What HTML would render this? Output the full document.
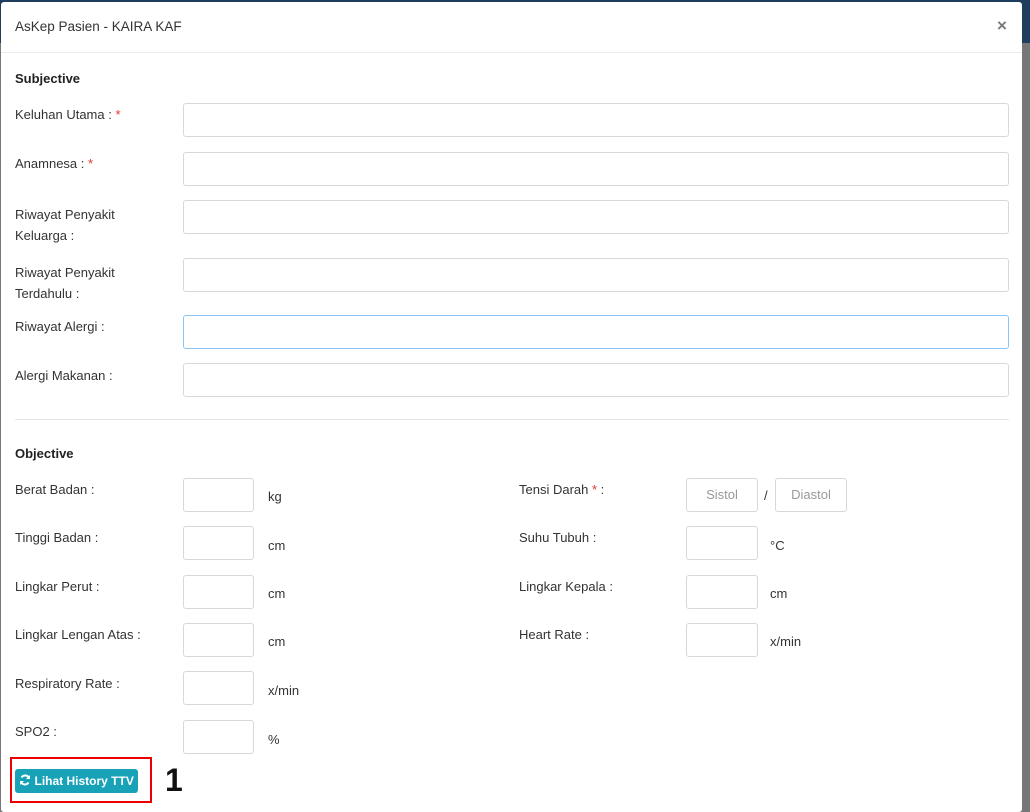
<!DOCTYPE html>
<html><head><style>
body{margin:0;width:1030px;height:805px;overflow:hidden;background:#777;font-family:"Liberation Sans",sans-serif;position:relative}
.top{position:absolute;left:0;top:0;width:1030px;height:43px;background:#1f3d5c}
.modal{position:absolute;left:1px;top:2px;width:1021px;height:810px;background:#fff;border-radius:3px}
.a{position:absolute}
.t{font-size:13px;color:#333}
.b{font-weight:bold;color:#222}
.in{position:absolute;border:1px solid #d6d9dc;border-radius:3px;height:32px;background:#fff;box-sizing:border-box}
.r{color:#e3342f}
.ph{font-size:13px;color:#999;text-align:center;line-height:32px}
</style></head><body>
<div class="top"></div>
<div class="modal"></div>
<div class="a t" style="left:15px;top:19px;font-size:13.5px">AsKep Pasien - KAIRA KAF</div>
<div class="a" style="left:997px;top:16px;font-size:17px;font-weight:bold;color:#777">×</div>
<div class="a" style="left:1px;top:52px;width:1021px;height:1px;background:#e9ecef"></div>
<div class="a t b" style="left:15px;top:71px">Subjective</div>
<div class="a t" style="left:15px;top:107px">Keluhan Utama : <span class="r">*</span></div>
<div class="in" style="left:183px;top:103px;width:826px;height:34px"></div>
<div class="a t" style="left:15px;top:156px">Anamnesa : <span class="r">*</span></div>
<div class="in" style="left:183px;top:152px;width:826px;height:34px"></div>
<div class="a t" style="left:15px;top:204px;line-height:21px">Riwayat Penyakit<br>Keluarga :</div>
<div class="in" style="left:183px;top:200px;width:826px;height:34px"></div>
<div class="a t" style="left:15px;top:262px;line-height:21px">Riwayat Penyakit<br>Terdahulu :</div>
<div class="in" style="left:183px;top:258px;width:826px;height:34px"></div>
<div class="a t" style="left:15px;top:319px">Riwayat Alergi :</div>
<div class="in" style="left:183px;top:315px;width:826px;height:34px;border-color:#8cc4f5"></div>
<div class="a t" style="left:15px;top:368px">Alergi Makanan :</div>
<div class="in" style="left:183px;top:363px;width:826px;height:34px"></div>
<div class="a" style="left:15px;top:419px;width:994px;height:1px;background:#e3e6e9"></div>
<div class="a t b" style="left:15px;top:446px">Objective</div>

<div class="a t" style="left:15px;top:482px">Berat Badan :</div>
<div class="in" style="left:183px;top:478px;width:71px;height:34px"></div>
<div class="a t" style="left:268px;top:489px">kg</div>
<div class="a t" style="left:15px;top:530px">Tinggi Badan :</div>
<div class="in" style="left:183px;top:526px;width:71px;height:34px"></div>
<div class="a t" style="left:268px;top:538px">cm</div>
<div class="a t" style="left:15px;top:579px">Lingkar Perut :</div>
<div class="in" style="left:183px;top:575px;width:71px;height:34px"></div>
<div class="a t" style="left:268px;top:586px">cm</div>
<div class="a t" style="left:15px;top:627px">Lingkar Lengan Atas :</div>
<div class="in" style="left:183px;top:623px;width:71px;height:34px"></div>
<div class="a t" style="left:268px;top:634px">cm</div>
<div class="a t" style="left:15px;top:676px">Respiratory Rate :</div>
<div class="in" style="left:183px;top:671px;width:71px;height:34px"></div>
<div class="a t" style="left:268px;top:683px">x/min</div>
<div class="a t" style="left:15px;top:724px">SPO2 :</div>
<div class="in" style="left:183px;top:720px;width:71px;height:34px"></div>
<div class="a t" style="left:268px;top:732px">%</div>

<div class="a t" style="left:519px;top:482px">Tensi Darah <span class="r">*</span> :</div>
<div class="in ph" style="left:686px;top:478px;width:72px;height:34px">Sistol</div>
<div class="a t" style="left:764px;top:488px">/</div>
<div class="in ph" style="left:775px;top:478px;width:72px;height:34px">Diastol</div>
<div class="a t" style="left:519px;top:530px">Suhu Tubuh :</div>
<div class="in" style="left:686px;top:526px;width:72px;height:34px"></div>
<div class="a t" style="left:770px;top:538px">°C</div>
<div class="a t" style="left:519px;top:579px">Lingkar Kepala :</div>
<div class="in" style="left:686px;top:575px;width:72px;height:34px"></div>
<div class="a t" style="left:770px;top:586px">cm</div>
<div class="a t" style="left:519px;top:627px">Heart Rate :</div>
<div class="in" style="left:686px;top:623px;width:72px;height:34px"></div>
<div class="a t" style="left:770px;top:634px">x/min</div>

<div class="a" style="left:10px;top:757px;width:142px;height:46px;border:2px solid #e00;box-sizing:border-box"></div>
<div class="a" style="left:15px;top:769px;width:123px;height:24px;background:#17a2b8;border-radius:3px;color:#fff;font-size:12px;font-weight:bold;line-height:24px;text-align:center">
<svg width="12" height="12" viewBox="0 0 12 12" style="vertical-align:-1px"><path d="M10 4A4.3 4.3 0 0 0 2.5 3.5M2 8a4.3 4.3 0 0 0 7.5 0.5" stroke="#fff" stroke-width="2" fill="none"/><path d="M11 1v4H7zM1 11V7h4z" fill="#fff"/></svg> Lihat History TTV</div>
<div class="a" style="left:165px;top:762px;font-size:32px;font-weight:bold;color:#111">1</div>
</body></html>
